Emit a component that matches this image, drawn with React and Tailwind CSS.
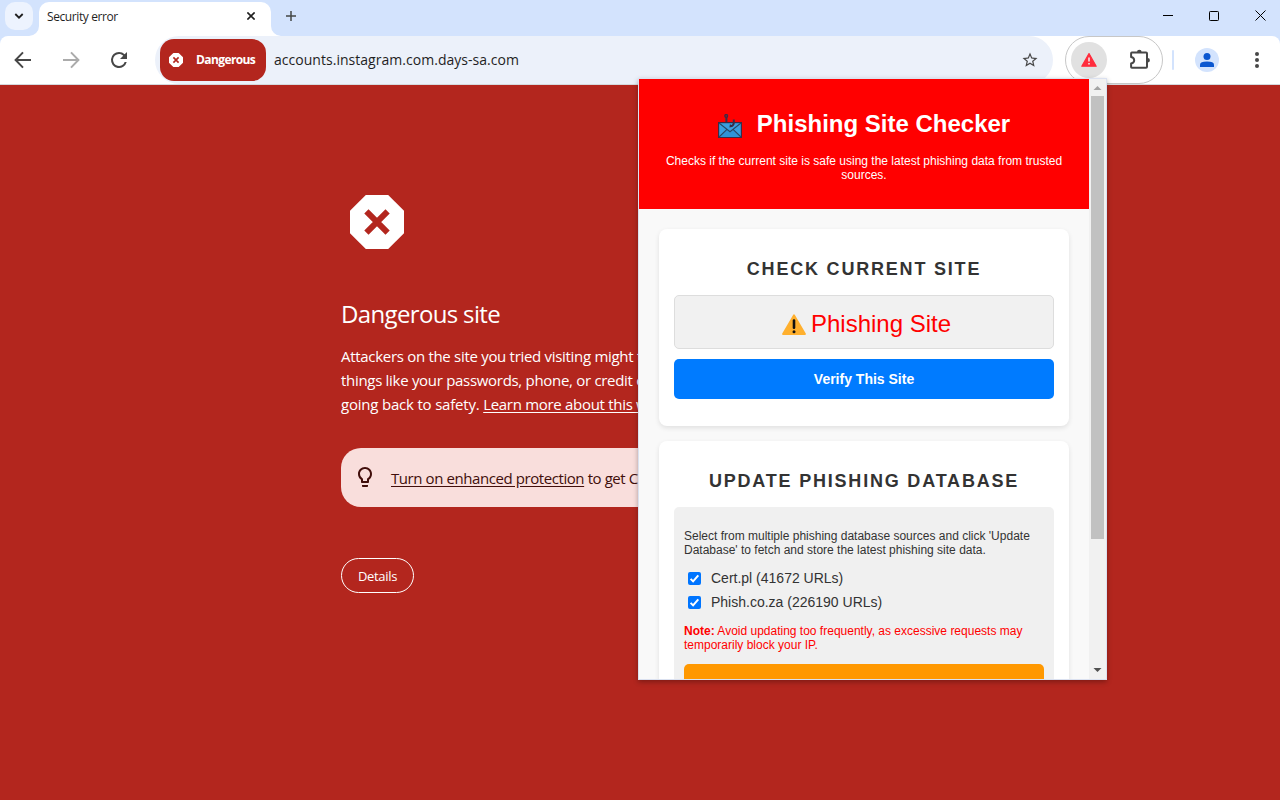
import React from "react";

function TabStrip() {
  return (
    <div className="flex h-9 shrink-0 items-start bg-[#d3e3fd] pl-[5px]">
      <div className="mt-[2px] flex h-7 w-7 items-center justify-center rounded-[10px] bg-[#edf3fe]">
        <svg width="10" height="8" viewBox="0 0 10 8" fill="none" stroke="#1f1f1f" strokeWidth="1.8">
          <path d="M1.3 2 L5 5.7 L8.7 2" />
        </svg>
      </div>
      <div className="relative ml-[6px] mt-[2px] flex h-[34px] w-[232px] items-start rounded-t-[10px] bg-white pl-2">
        <svg className="absolute -left-[10px] bottom-0" width="10" height="10" viewBox="0 0 10 10" fill="#fff">
          <path d="M10 0 A10 10 0 0 1 0 10 H10Z" />
        </svg>
        <svg className="absolute -right-[10px] bottom-0" width="10" height="10" viewBox="0 0 10 10" fill="#fff">
          <path d="M0 0 A10 10 0 0 0 10 10 H0Z" />
        </svg>
        <span className="mt-[7px] flex-1 whitespace-nowrap text-[12px] leading-4 tracking-[-0.4px] text-[#1f1f1f]">Security error</span>
        <svg className="mr-[16px] mt-[10px]" width="8" height="8" viewBox="0 0 8 8" stroke="#1f1f1f" strokeWidth="1.6">
          <path d="M0.4 0.4 L7.6 7.6 M7.6 0.4 L0.4 7.6" />
        </svg>
      </div>
      <svg className="ml-[15px] mt-[11px]" width="10" height="10" viewBox="0 0 10 10" stroke="#444746" strokeWidth="1.5">
        <path d="M5 0 V10 M0 5 H10" />
      </svg>
      <div className="mr-[14px] mt-[10px] flex flex-1 items-center justify-end gap-9">
        <svg width="10" height="11" viewBox="0 0 10 11" stroke="#000" strokeWidth="1">
          <path d="M0 5.5 H10" />
        </svg>
        <svg width="10" height="11" viewBox="0 0 10 11" fill="none" stroke="#000" strokeWidth="1">
          <rect x="0.5" y="1.5" width="9" height="9" rx="0.8" />
        </svg>
        <svg width="11" height="11" viewBox="0 0 11 11" stroke="#000" strokeWidth="1">
          <path d="M0.5 0.5 L10.5 10.5 M10.5 0.5 L0.5 10.5" />
        </svg>
      </div>
    </div>
  );
}

function Toolbar() {
  return (
    <div className="h-[49px] shrink-0 bg-[#d3e3fd]">
      <div className="flex h-[49px] items-start rounded-t-[8px] border-b border-[#d5d9dd] bg-white">
        <div className="flex h-12 w-[155px] items-center pl-[11px]">
          <svg width="24" height="24" viewBox="0 0 24 24" fill="none" stroke="#474747" strokeWidth="2">
            <path d="M20 12 H5.2 M12 4.4 L4.6 12 L12 19.6" />
          </svg>
          <svg className="ml-6" width="24" height="24" viewBox="0 0 24 24" fill="none" stroke="#ababab" strokeWidth="2">
            <path d="M4 12 H18.8 M12 4.4 L19.4 12 L12 19.6" />
          </svg>
          <svg className="ml-6" width="24" height="24" viewBox="0 0 24 24" fill="#474747">
            <path d="M17.65 6.35A7.95 7.95 0 0 0 12 4a8 8 0 1 0 7.73 10h-2.08A6 6 0 1 1 12 6c1.66 0 3.14.69 4.22 1.78L13 11h7V4z" />
          </svg>
        </div>
        <div className="flex h-12 w-[898px] items-center rounded-full bg-[#ecf1fa] pl-[5px] pr-[14px]">
          <div className="flex h-[42px] w-[106px] items-center rounded-[14px] bg-[#b3261e] pl-[9px] text-white">
            <svg width="14" height="14" viewBox="0 0 14 14">
              <path d="M4.6 0.7 H9.4 L13.3 4.6 V9.4 L9.4 13.3 H4.6 L0.7 9.4 V4.6Z" fill="#fff" stroke="#fff" strokeWidth="1.4" strokeLinejoin="round" />
              <path d="M4.4 4.4 L9.6 9.6 M9.6 4.4 L4.4 9.6" stroke="#b3261e" strokeWidth="1.6" />
            </svg>
            <span className="ml-[13px] text-[12px] font-bold leading-4 tracking-[-0.6px]">Dangerous</span>
          </div>
          <span className="ml-[8px] flex-1 whitespace-nowrap text-[14px] leading-5 tracking-[0.03px] text-[#1f1f1f]">accounts.instagram.com.days-sa.com</span>
          <svg width="18" height="18" viewBox="0 0 24 24" fill="#474747">
            <path d="M22 9.24l-7.19-.62L12 2 9.19 8.63 2 9.24l5.46 4.73L5.82 21 12 17.27 18.18 21l-1.63-7.03L22 9.24zM12 15.4l-3.76 2.27 1-4.28-3.32-2.88 4.38-.38L12 6.1l1.71 4.04 4.38.38-3.32 2.88 1 4.28L12 15.4z" />
          </svg>
        </div>
        <div className="ml-3 flex h-12 w-[98px] items-center rounded-full border border-[#c7c7c7] pl-[5px]">
          <div className="flex h-9 w-9 items-center justify-center rounded-full bg-[#e1e1e1]">
            <svg width="16" height="16" viewBox="0 0 16 16">
              <path d="M8 1.6 L15.2 14.2 H0.8Z" fill="#ff2d3d" stroke="#ff2d3d" strokeWidth="1.2" strokeLinejoin="round" />
              <path d="M8 5.6 V9.6 M8 11 V12.6" stroke="#f4e4e4" strokeWidth="1.6" />
            </svg>
          </div>
          <svg className="ml-[22px]" width="22" height="22" viewBox="0 0 22 22">
            <path d="M4 3.6 H17 Q18 3.6 18 4.6 V17.8 Q18 18.8 17 18.8 H2.9 Q2.1 18.8 2.1 18 V14.5 Q5.2 13.8 5.2 11.2 Q5.2 8.6 2.1 7.9 V4.4 Q2.1 3.6 2.9 3.6Z" fill="none" stroke="#474747" strokeWidth="2" strokeLinejoin="round" />
            <path d="M8 3 A2.3 2.3 0 0 1 12.6 3Z M18.6 8.9 A2.3 2.3 0 0 1 18.6 13.5Z" fill="#474747" />
          </svg>
        </div>
        <div className="ml-[9px] mt-[14px] h-5 w-[2px] rounded-full bg-[#d3e3fd]" />
        <div className="ml-[21px] mt-3 flex h-6 w-6 items-center justify-center rounded-full bg-[#d3e3fd]">
          <svg width="14" height="14" viewBox="0 0 14 14" fill="#0b57d0">
            <circle cx="7" cy="3.5" r="3.5" />
            <path d="M0 14 V11.6 Q0 8.4 7 8.4 Q14 8.4 14 11.6 V14Z" />
          </svg>
        </div>
        <svg className="ml-[36px] mt-[15px]" width="4" height="18" viewBox="0 0 4 18" fill="#474747">
          <circle cx="2" cy="3" r="2" />
          <circle cx="2" cy="9" r="2" />
          <circle cx="2" cy="15" r="2" />
        </svg>
      </div>
    </div>
  );
}

function WarningPage() {
  return (
    <div className="flex flex-1 flex-col items-start bg-[#b3261e] pl-[341px] pt-[110px] text-white">
      <svg className="ml-[9px]" width="54" height="54" viewBox="0 0 54 54">
        <path d="M15.8 0 H38.2 L54 15.8 V38.2 L38.2 54 H15.8 L0 38.2 V15.8Z" fill="#fff" />
        <path d="M16.4 16.4 L37.6 37.6 M37.6 16.4 L16.4 37.6" stroke="#b3261e" strokeWidth="6" />
      </svg>
      <h1 className="mt-[50px] whitespace-nowrap text-[24px] leading-[29px] tracking-[-0.65px]">Dangerous site</h1>
      <p className="mt-[16px] w-[598px] whitespace-nowrap text-[15px] leading-6 tracking-[-0.3px]">
        Attackers on the site you tried visiting might trick you
        <br />
        things like your passwords, phone, or credit card
        <br />
        <span className="tracking-[-0.2px]">going back to safety. </span>
        <a className="underline underline-offset-2">Learn more about this warning</a>
      </p>
      <div className="mt-[32px] flex h-[59px] w-[598px] items-center rounded-[20px] bg-[#f9dedc] text-[#410e0b]">
        <svg className="-mt-[2px] ml-3" width="24" height="24" viewBox="0 0 24 24" fill="#410e0b">
          <path d="M9 21c0 .55.45 1 1 1h4c.55 0 1-.45 1-1v-1H9v1zm3-19C8.14 2 5 5.14 5 9c0 2.38 1.19 4.47 3 5.74V17c0 .55.45 1 1 1h6c.55 0 1-.45 1-1v-2.26c1.81-1.27 3-3.36 3-5.74 0-3.86-3.14-7-7-7zm2.85 11.1l-.85.6V16h-4v-2.3l-.85-.6A4.997 4.997 0 0 1 7 9c0-2.76 2.24-5 5-5s5 2.24 5 5c0 1.63-.8 3.16-2.15 4.1z" />
        </svg>
        <span className="ml-[14px] whitespace-nowrap text-[15px] leading-6 tracking-[-0.42px]">
          <a className="underline underline-offset-2">Turn on enhanced protection</a> to get Chrome’s
        </span>
      </div>
      <button className="mt-[51px] flex h-[35px] w-[73px] items-center justify-center rounded-full border border-white pt-[2px] text-[13px] tracking-[-0.3px]">Details</button>
    </div>
  );
}

function MailHookIcon() {
  return (
    <svg width="24" height="24" viewBox="0 0 24 24">
      <rect x="0.6" y="8.6" width="22.8" height="14.8" fill="#3a9fe0" stroke="#3c2b45" strokeWidth="1.2" />
      <path d="M1 23 L9 15.5 L12 17.8 L15 15.5 L23 23Z" fill="#2f93d6" />
      <path d="M1 9 L12 17.8 L23 9 M1 23 L9 15.4 M23 23 L15 15.4" fill="none" stroke="#2b4664" strokeWidth="1.1" />
      <circle cx="8.2" cy="1.9" r="1.3" fill="none" stroke="#3c2b45" strokeWidth="1.5" />
      <path d="M8.4 3 V8.4 M15.8 5.5 V9 Q15.6 12.2 12.2 12.2" fill="none" stroke="#3c2b45" strokeWidth="2" />
      <path d="M11.4 13.4 L12 10 L14.4 12.6Z" fill="#3c2b45" />
    </svg>
  );
}

function Source({ label }) {
  return (
    <label className="flex h-6 items-center pl-1">
      <svg width="13" height="13" viewBox="0 0 13 13">
        <rect width="13" height="13" rx="2" fill="#0075ff" />
        <path d="M2.6 6.9 L5.1 9.4 L10.3 3.3" fill="none" stroke="#fff" strokeWidth="2" />
      </svg>
      <span className="ml-[10px] text-[14px] leading-4">{label}</span>
    </label>
  );
}

function Popup() {
  return (
    <div className="absolute left-[638px] top-[78px] flex h-[602px] w-[469px] overflow-hidden border border-[#dbe1f0] bg-[#f9f9f9] font-['Liberation_Sans',Arial,sans-serif] text-[#333] shadow-[0_2px_5px_rgba(0,0,0,0.3)]">
      <div className="flex w-[450px] flex-col">
        <header className="flex h-[130px] shrink-0 flex-col items-center bg-[#ff0000] pt-[31px] text-white">
          <div className="flex items-start">
            <span className="mr-[15px] mt-[4px] h-6"><MailHookIcon /></span>
            <h1 className="text-[24px] font-bold leading-7">Phishing Site Checker</h1>
          </div>
          <p className="mt-[16px] whitespace-nowrap text-center text-[12px] leading-[14px]">
            Checks if the current site is safe using the latest phishing data from trusted
            <br />
            sources.
          </p>
        </header>
        <section className="mx-5 mt-5 flex h-[197px] shrink-0 flex-col rounded-[8px] bg-white px-[15px] shadow-[0_2px_5px_rgba(0,0,0,0.1)]">
          <h2 className="mt-[30px] text-center text-[18px] font-bold leading-[21px] tracking-[1.8px]">CHECK CURRENT SITE</h2>
          <div className="mt-[15px] flex h-[54px] items-center justify-center rounded-[5px] border border-[#ddd] bg-[#f1f1f1] pl-[5px] pt-[3px] text-[24px] text-[#ff0000]">
            <svg className="mr-[5px] mt-[1px]" width="24" height="21" viewBox="0 0 24 21">
              <path d="M12 1.2 L23 20 H1Z" fill="#ffb02e" stroke="#ffb02e" strokeWidth="1.8" strokeLinejoin="round" />
              <path d="M12 6.6 V13.8" stroke="#111" strokeWidth="2.6" strokeLinecap="round" />
              <circle cx="12" cy="17.7" r="1.5" fill="#111" />
            </svg>
            <span className="leading-7">Phishing Site</span>
          </div>
          <button className="mt-[10px] h-10 rounded-[5px] bg-[#007bff] text-[14px] font-bold text-white">Verify This Site</button>
        </section>
        <section className="mx-5 mt-[15px] flex h-[400px] shrink-0 flex-col rounded-[8px] bg-white px-[15px] shadow-[0_2px_5px_rgba(0,0,0,0.1)]">
          <h2 className="mt-[30px] whitespace-nowrap text-center text-[18px] font-bold leading-[21px] tracking-[1.8px]">UPDATE PHISHING DATABASE</h2>
          <div className="mt-[15px] flex flex-1 flex-col rounded-[5px] bg-[#f0f0f0] px-[10px] pt-[22px] text-[12px] leading-[14px]">
            <p className="whitespace-nowrap">
              Select from multiple phishing database sources and click 'Update
              <br />
              Database' to fetch and store the latest phishing site data.
            </p>
            <div className="mt-[9px] flex flex-col">
              <Source label="Cert.pl (41672 URLs)" />
              <Source label="Phish.co.za (226190 URLs)" />
            </div>
            <p className="mt-[10px] whitespace-nowrap text-[#ff0000]">
              <b>Note:</b> Avoid updating too frequently, as excessive requests may
              <br />
              temporarily block your IP.
            </p>
            <div className="mt-[12px] h-10 shrink-0 rounded-[5px] bg-[#ff9800]" />
          </div>
        </section>
      </div>
      <div className="flex w-[17px] flex-col items-center bg-[#f1f1f1]">
        <svg className="shrink-0" width="17" height="17" viewBox="0 0 17 17" fill="#a3a3a3">
          <path d="M8.5 7 L12.5 11 H4.5Z" />
        </svg>
        <div className="h-[443px] w-[13px] shrink-0 bg-[#c1c1c1]" />
        <div className="flex-1" />
        <svg className="shrink-0" width="17" height="17" viewBox="0 0 17 17" fill="#505050">
          <path d="M8.5 10 L4.5 6 H12.5Z" />
        </svg>
      </div>
    </div>
  );
}

export default function App() {
  return (
    <div className="relative flex h-[800px] w-[1280px] flex-col overflow-hidden font-['Open_Sans','Noto_Sans',sans-serif]">
      <TabStrip />
      <Toolbar />
      <WarningPage />
      <Popup />
    </div>
  );
}
